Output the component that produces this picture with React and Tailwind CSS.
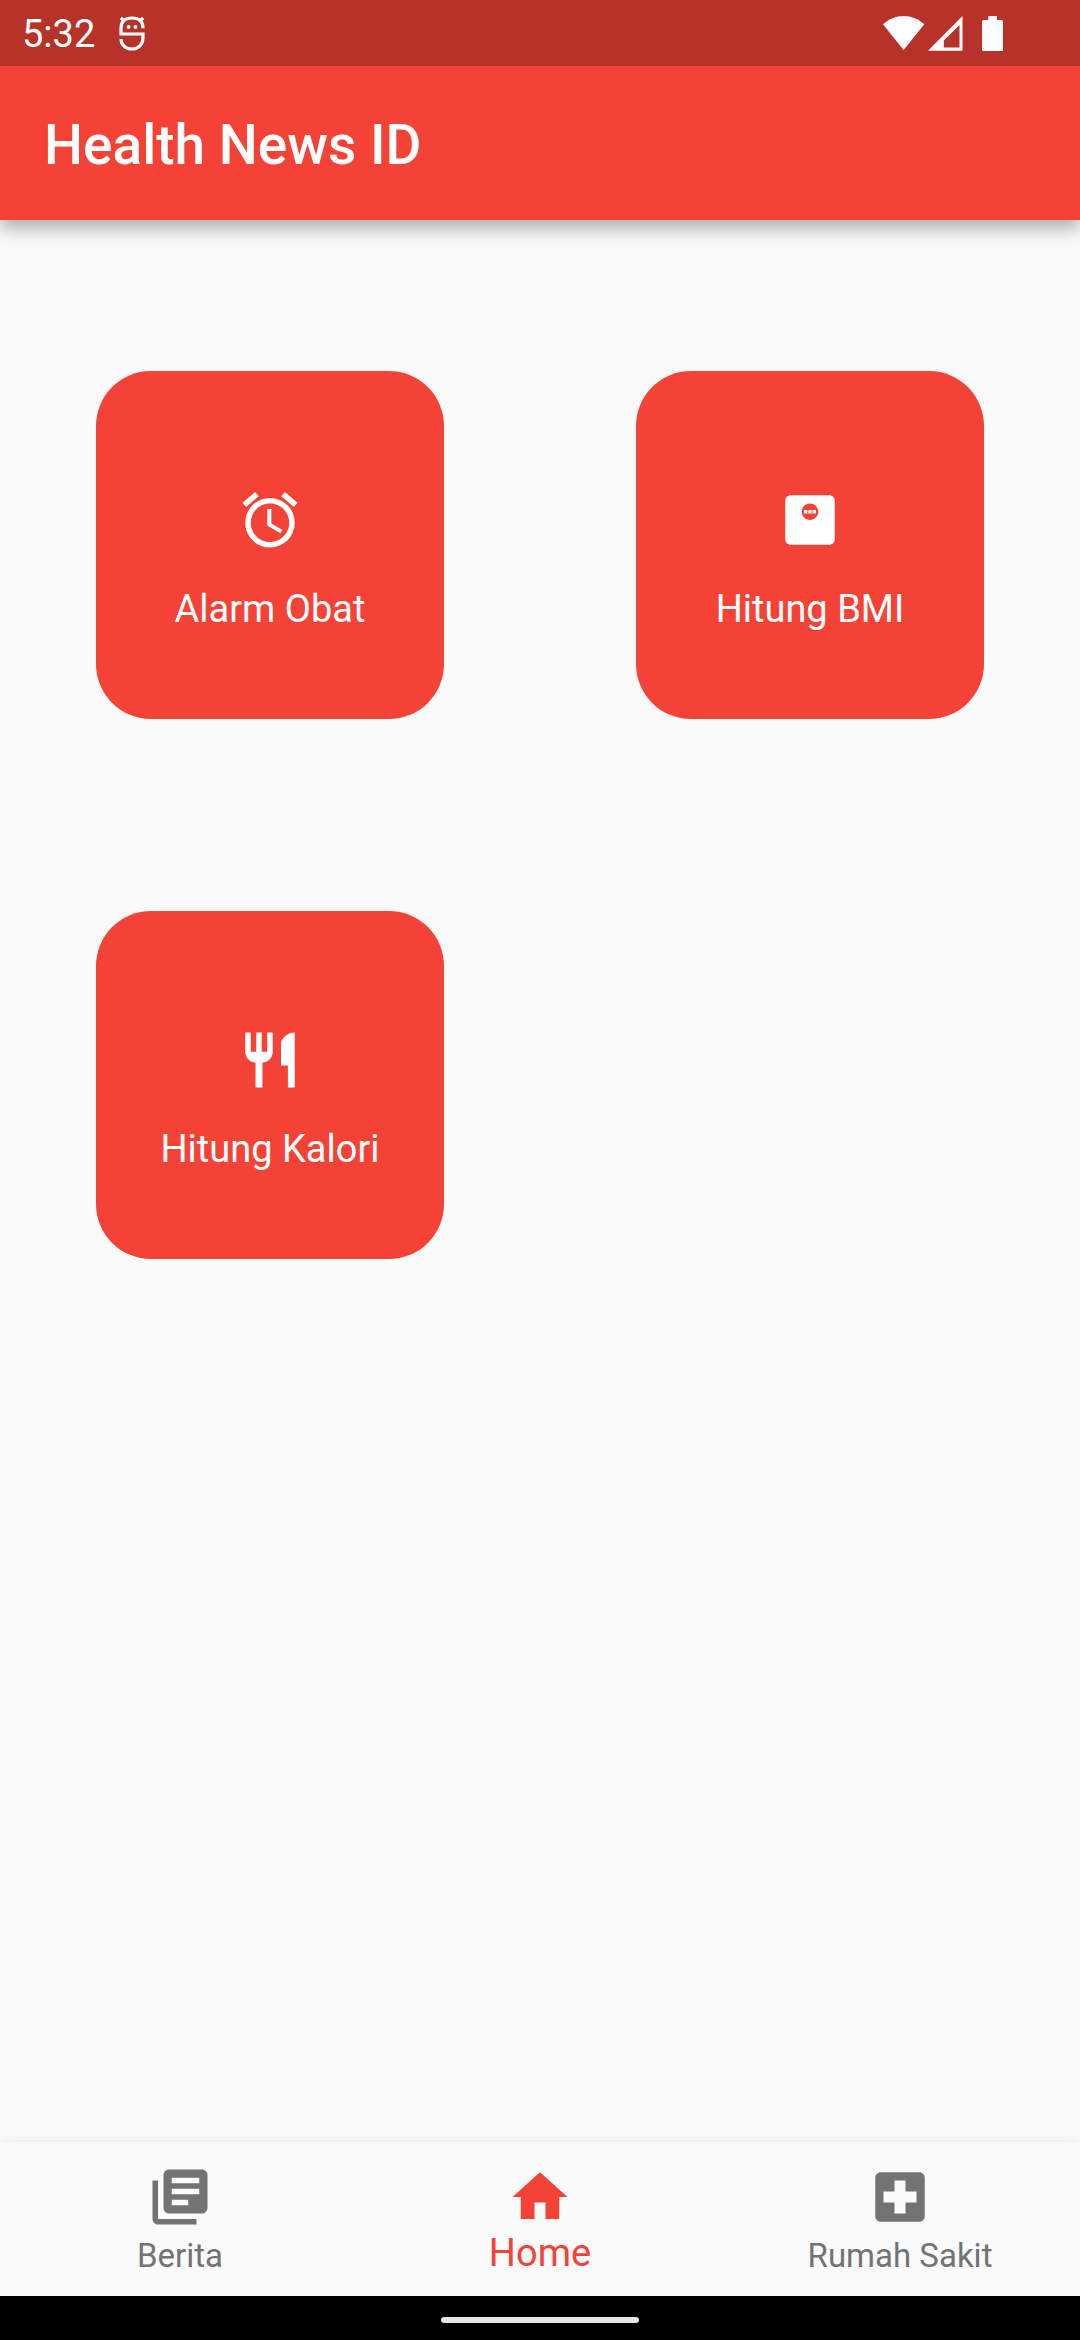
import { MdAlarm, MdRestaurant, MdLibraryBooks, MdHome, MdLocalHospital } from "react-icons/md";

function ScaleIcon({ className }) {
  return (
    <svg viewBox="0 0 24 24" className={className} fill="currentColor" aria-hidden="true">
      <path d="M19 3H5c-1.100 0-2 .9-2 2v14c0 1.100.9 2 2 2h14c1.100 0 2-.9 2-2V5c0-1.100-.9-2-2-2zm-7 9c-1.660 0-3-1.340-3-3s1.340-3 3-3 3 1.340 3 3-1.340 3-3 3z" />
      <path d="M9.850 8.400h1.200v1.200h-1.200zM11.400 8.400h1.200v1.200h-1.200zM12.950 8.400h1.200v1.200h-1.200z" />
    </svg>
  );
}

const features = [
  { label: "Alarm Obat", Icon: MdAlarm },
  { label: "Hitung BMI", Icon: ScaleIcon },
  { label: "Hitung Kalori", Icon: MdRestaurant },
];

const tabs = [
  { label: "Berita", Icon: MdLibraryBooks },
  { label: "Home", Icon: MdHome, active: true },
  { label: "Rumah Sakit", Icon: MdLocalHospital },
];

function DebugIcon() {
  return (
    <svg viewBox="0 0 26 36" className="h-9 w-[26px]" fill="none" stroke="currentColor" strokeWidth="3.2" aria-hidden="true">
      <path d="M24 13.200C24 6 20 3 13 3S2 6 2 13.200V19H24V22.500C24 29.500 19.500 34 13 34S2 29.500 2 24" />
      <path d="M1.800 3l3.800 3.200M24.200 3l-3.800 3.200" />
      <circle cx="9.600" cy="12" r="1.900" fill="currentColor" stroke="none" />
      <circle cx="16.400" cy="12" r="1.900" fill="currentColor" stroke="none" />
    </svg>
  );
}

function WifiIcon() {
  return (
    <svg viewBox="0 0 42 36" className="h-9 w-[42px]" fill="currentColor" aria-hidden="true">
      <path d="M0 9.300C6 4 13 1 20.600 1S35.500 4 41.300 9.300L20.600 35z" />
    </svg>
  );
}

function SignalIcon() {
  return (
    <svg viewBox="0 0 36 36" className="h-9 w-9" fill="currentColor" fillRule="evenodd" aria-hidden="true">
      <path d="M35.500 1V35.800H1zM32.500 10L16.800 25.500V32.500H32.500z" />
    </svg>
  );
}

function BatteryIcon() {
  return (
    <svg viewBox="0 0 22 36" className="h-9 w-[22px]" fill="currentColor" aria-hidden="true">
      <path d="M6.300 1H15V5H19.300Q21 5 21 6.700V34.500Q21 36 19.300 36H1.700Q0 36 0 34.500V6.700Q0 5 1.700 5H6.300z" />
    </svg>
  );
}

function StatusBar() {
  return (
    <div className="flex h-[66px] items-center justify-between bg-[#b73229] pr-[76px] pl-[22px] text-white">
      <div className="flex items-center gap-6">
        <span className="pt-0.5 text-[38px] leading-[46px]">5:32</span>
        <DebugIcon />
      </div>
      <div className="flex items-center">
        <WifiIcon />
        <span className="ml-0.5 flex">
          <SignalIcon />
        </span>
        <span className="ml-[19px] flex">
          <BatteryIcon />
        </span>
      </div>
    </div>
  );
}

export default function App() {
  return (
    <div className="flex min-h-screen flex-col bg-[#fafafa] font-['Roboto',sans-serif]">
      <header className="shadow-[0_8px_18px_rgba(0,0,0,0.32)]">
        <StatusBar />
        <div className="flex h-[154px] items-center bg-[#f44336] px-11 pt-1">
          <h1 className="text-[55px] leading-[64px] font-medium text-white">Health News ID</h1>
        </div>
      </header>

      <main className="grid flex-1 grid-cols-2 content-start pt-[55px]">
        {features.map(({ label, Icon }) => (
          <div key={label} className="p-24">
            <button
              type="button"
              className="flex aspect-square w-full flex-col items-center justify-center rounded-[55px] bg-[#f44336] pb-1 text-white"
            >
              <span className="flex h-[132px] items-center">
                <Icon className="size-[66px]" aria-hidden="true" />
              </span>
              <span className="text-[38px] leading-[46px]">{label}</span>
            </button>
          </div>
        ))}
      </main>

      <nav className="grid h-[154px] grid-cols-3 bg-[#fafafa] shadow-[0_-1px_8px_rgba(0,0,0,0.08)]">
        {tabs.map(({ label, Icon, active }) => (
          <button
            key={label}
            type="button"
            aria-current={active ? "page" : undefined}
            className={
              active
                ? "flex flex-col items-center pt-[22px] text-[38px] leading-[46px] text-[#f44336]"
                : "flex flex-col items-center pt-[22px] text-[33px] leading-[52px] text-[#737373]"
            }
          >
            <Icon className="size-[66px]" aria-hidden="true" />
            <span>{label}</span>
          </button>
        ))}
      </nav>

      <div className="flex h-11 items-center justify-center bg-black pt-1">
        <div className="h-1.5 w-[198px] rounded-full bg-[#e6e4e9]" />
      </div>
    </div>
  );
}
